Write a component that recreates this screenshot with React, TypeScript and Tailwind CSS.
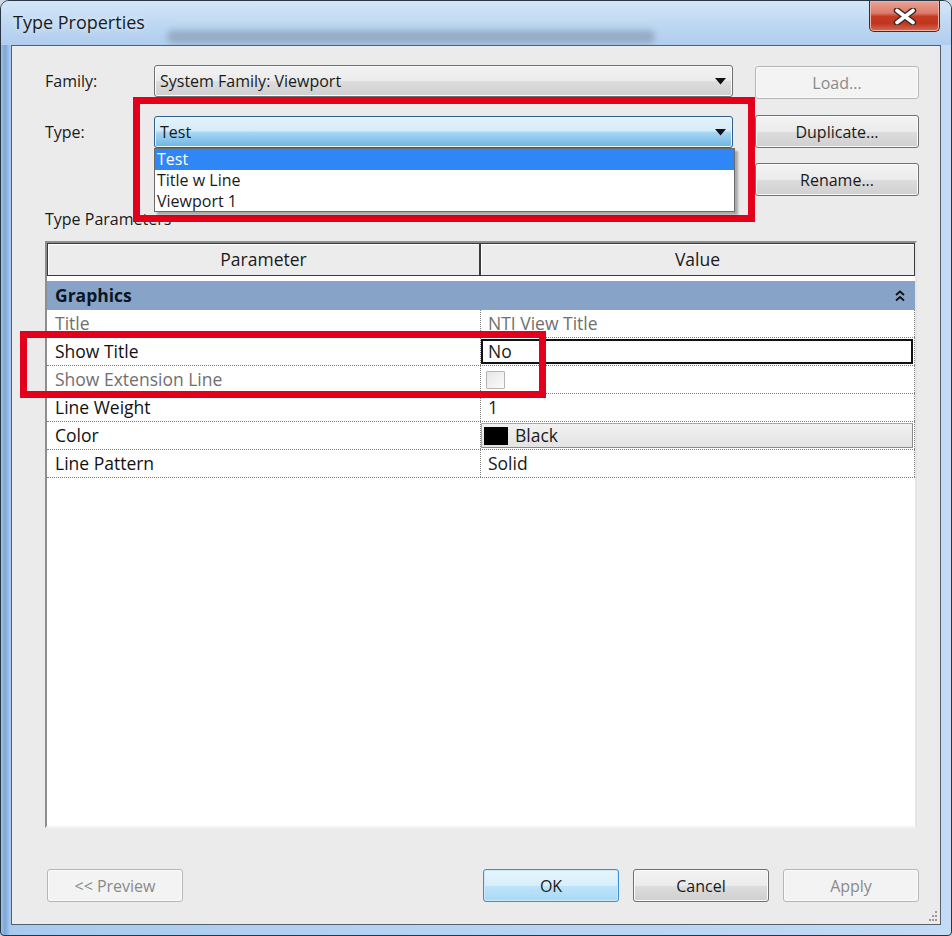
import React from "react";

type Kind = "normal" | "disabled" | "default";

function Btn({ label, kind = "normal", w = "w-[136px]" }: { label: string; kind?: Kind; w?: string }) {
  const cls =
    kind === "disabled"
      ? "border-[#b4b7ba] bg-[#f3f3f3] text-[#8a8a8a] shadow-[inset_0_0_0_1px_#fafafa]"
      : kind === "default"
      ? "border-[#3c8fd0] bg-[image:linear-gradient(#e7f5fd_0%,#d7eefb_50%,#bde4fa_51%,#a9d9f4_100%)] text-[#1a1a1a] shadow-[inset_0_0_0_1px_#cbe9fb]"
      : "border-[#707070] bg-[image:linear-gradient(#f3f3f3_0%,#ebebeb_50%,#dddddd_51%,#cfcfcf_100%)] text-[#1a1a1a] shadow-[inset_0_0_0_1px_#fbfbfb]";
  return (
    <div className={`h-[33px] ${w} shrink-0 rounded-[3px] border flex items-center justify-center text-[16px] ${cls}`}>
      {label}
    </div>
  );
}

function Arrow() {
  return (
    <svg width="11" height="7" viewBox="0 0 11 7">
      <path d="M0 0H11L5.5 6.5Z" fill="#111" />
    </svg>
  );
}

function Row({
  name,
  value,
  dim = false,
}: {
  name: string;
  value: React.ReactNode;
  dim?: boolean;
}) {
  return (
    <div className="flex h-[28px] border-b border-dotted border-[#7d7d7d]">
      <div className={`w-[433px] shrink-0 pl-[8px] flex items-center text-[17.5px] ${dim ? "text-[#6f6f6f]" : "text-[#111]"}`}>
        {name}
      </div>
      <div className="flex-1 border-l border-r border-dotted border-[#7d7d7d] flex items-stretch">{value}</div>
    </div>
  );
}

export default function App() {
  return (
    <div className="w-[952px] h-[936px] bg-[#cfd8e2] font-['Open_Sans','Noto_Sans',sans-serif] text-[#1a1a1a]">
      <div className="w-full h-full flex flex-col rounded-t-[9px] rounded-b-[4px] border border-[#2a3543] bg-[image:linear-gradient(90deg,#9dc0ea_0px,#7ea6d6_4px,#a9caef_9px,#b4d2f2_40%,#c3dbf4_100%)] relative overflow-hidden">
        {/* title bar */}
        <div className="h-[44px] shrink-0 flex justify-between relative bg-[image:linear-gradient(180deg,#d3e6f8_0%,#bcd6f1_60%,#b0cdef_100%)]">
          <div className="absolute left-[166px] top-[29px] w-[488px] h-[14px] rounded-[6px] bg-[#8ea4be] blur-[3px] opacity-80" />
          <div className="relative pl-[12px] pt-[8px] text-[18px] text-[#1b1b1b] [text-shadow:0_0_6px_#eaf3fc]">
            Type Properties
          </div>
          <div className="relative mr-[11px] w-[71px] h-[31px] rounded-b-[5px] border border-t-0 border-[#5b2019] bg-[image:linear-gradient(180deg,#e9a396_0%,#dc7b69_40%,#c53a22_52%,#c2361f_75%,#d56a52_100%)] shadow-[inset_0_0_0_1px_#f0b3a6] flex items-center justify-center">
            <svg width="24" height="17" viewBox="0 0 24 17">
              <path d="M4 2.5 L20 14.5 M20 2.5 L4 14.5" stroke="#3d2a27" strokeWidth="6.5" strokeLinecap="round" />
              <path d="M4 2.5 L20 14.5 M20 2.5 L4 14.5" stroke="#ffffff" strokeWidth="3.6" strokeLinecap="round" />
            </svg>
          </div>
        </div>

        {/* client area */}
        <div className="mx-[10px] mb-[10px] flex-1 border border-[#55606c] bg-[#ebebeb] relative flex flex-col pl-[33px] pr-[21px] pt-[19px] pb-[22px]">
          {/* Family row */}
          <div className="flex items-start h-[33px]">
            <div className="w-[109px] shrink-0 h-[32px] flex items-center text-[16px] text-[#1a1a1a]">Family:</div>
            <div className="w-[579px] shrink-0 h-[32px] rounded-[3px] border border-[#707070] bg-[image:linear-gradient(#f3f3f3_0%,#ebebeb_50%,#dddddd_51%,#cfcfcf_100%)] shadow-[inset_0_0_0_1px_#fbfbfb] flex items-center justify-between pl-[5px] pr-[6px] text-[16px]">
              <span>System Family: Viewport</span>
              <Arrow />
            </div>
            <div className="ml-auto mt-[1px]">
              <Btn label="Load..." kind="disabled" w="w-[164px]" />
            </div>
          </div>

          {/* Type row */}
          <div className="flex items-start h-[33px] mt-[17px]">
            <div className="w-[109px] shrink-0 h-[33px] flex items-center text-[16px]">Type:</div>
            <div className="relative w-[579px] shrink-0 mt-[1px]">
              <div className="h-[32px] rounded-[3px] border border-[#2f5f88] bg-[image:linear-gradient(#e5f3fc_0%,#d5ebf9_45%,#a6d6f3_52%,#6db5e2_100%)] shadow-[inset_0_0_0_1px_#eaf6fd] flex items-center justify-between pl-[5px] pr-[6px] text-[16px]">
                <span>Test</span>
                <Arrow />
              </div>
              <div className="absolute left-0 top-[32px] w-[581px] h-[64px] bg-white border border-[#6b6b6b] shadow-[3px_3px_2px_rgba(0,0,0,0.28)] z-10 text-[16px] leading-[21px]">
                <div className="h-[21px] bg-[#2f86f5] text-white pl-[2px]">Test</div>
                <div className="h-[21px] pl-[2px]">Title w Line</div>
                <div className="h-[20px] pl-[2px]">Viewport 1</div>
              </div>
            </div>
            <div className="ml-auto">
              <Btn label="Duplicate..." w="w-[164px]" />
            </div>
          </div>

          {/* Rename row */}
          <div className="flex h-[33px] mt-[15px] justify-end">
            <Btn label="Rename..." w="w-[164px]" />
          </div>

          <div className="mt-[13px] h-[20px] leading-[20px] text-[16px]">Type Parameters</div>

          {/* parameter grid */}
          <div className="mt-[12px] w-[872px] h-[587px] border-2 border-t-[#8e8e8e] border-l-[#8e8e8e] border-r-[#e4e4e4] border-b-[#f4f4f4] bg-white flex flex-col">
            <div className="flex h-[33px] shrink-0 text-[17.5px]">
              <div className="w-[433px] shrink-0 border border-[#3a3a3a] bg-[#ececec] shadow-[inset_1px_1px_0_#ffffff] flex items-center justify-center">
                Parameter
              </div>
              <div className="flex-1 border border-[#3a3a3a] bg-[#ececec] shadow-[inset_1px_1px_0_#ffffff] flex items-center justify-center">
                Value
              </div>
            </div>
            <div className="mt-[5px] h-[29px] shrink-0 bg-[#87a3c8] flex items-center justify-between pl-[8px] pr-[10px] text-[17.5px] font-bold text-[#0d1522]">
              <span>Graphics</span>
              <svg width="10" height="12" viewBox="0 0 10 12">
                <path d="M1 5 L5 1.5 L9 5 M1 10.5 L5 7 L9 10.5" stroke="#111" strokeWidth="1.8" fill="none" />
              </svg>
            </div>
            <Row
              name="Title"
              dim
              value={<div className="pl-[7px] flex items-center text-[17.5px] text-[#6f6f6f]">NTI View Title</div>}
            />
            <Row
              name="Show Title"
              value={
                <div className="flex-1 my-[1px] mr-[1px] border-2 border-[#111] flex items-center pl-[5px] text-[17.5px]">No</div>
              }
            />
            <Row
              name="Show Extension Line"
              dim
              value={
                <div className="pl-[5px] flex items-center">
                  <div className="w-[19px] h-[18px] border border-[#b5b5b5] rounded-[1px] bg-[image:linear-gradient(135deg,#e6e6e6,#fbfbfb)]" />
                </div>
              }
            />
            <Row name="Line Weight" value={<div className="pl-[7px] flex items-center text-[17.5px]">1</div>} />
            <Row
              name="Color"
              value={
                <div className="flex-1 my-[1px] mr-[1px] border border-[#a9a9a9] border-r-[#8a8a8a] border-b-[#8a8a8a] bg-[image:linear-gradient(#f2f2f2,#e3e3e3)] flex items-center pl-[2px] gap-[7px] text-[17.5px]">
                  <div className="w-[24px] h-[18px] bg-black" />
                  <span>Black</span>
                </div>
              }
            />
            <Row name="Line Pattern" value={<div className="pl-[7px] flex items-center text-[17.5px]">Solid</div>} />
          </div>

          {/* bottom buttons */}
          <div className="mt-[41px] flex items-start">
            <div className="ml-[2px]">
              <Btn label="<< Preview" kind="disabled" />
            </div>
            <div className="ml-auto flex gap-[14px]">
              <Btn label="OK" kind="default" />
              <Btn label="Cancel" />
              <Btn label="Apply" kind="disabled" />
            </div>
          </div>

          {/* resize grip */}
          <svg className="absolute right-[2px] bottom-[2px]" width="12" height="12" viewBox="0 0 12 12">
            <g fill="#9a9a9a">
              <rect x="9" y="1" width="2" height="2" />
              <rect x="6" y="5" width="2" height="2" />
              <rect x="9" y="5" width="2" height="2" />
              <rect x="3" y="9" width="2" height="2" />
              <rect x="6" y="9" width="2" height="2" />
              <rect x="9" y="9" width="2" height="2" />
            </g>
          </svg>

          {/* red annotation boxes */}
          <div className="absolute left-[121px] top-[51px] w-[622px] h-[125px] border-[7px] border-[#e2001a] pointer-events-none" />
          <div className="absolute left-[8px] top-[285px] w-[526px] h-[67px] border-[7px] border-[#e2001a] pointer-events-none z-20" />
        </div>
      </div>
    </div>
  );
}
